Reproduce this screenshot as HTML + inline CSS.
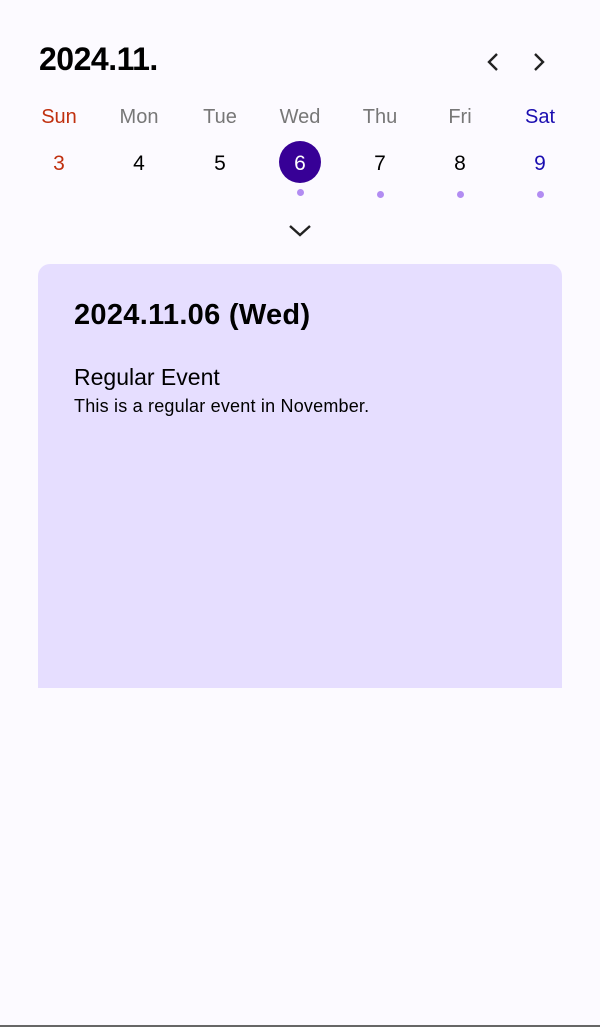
<!DOCTYPE html>
<html><head><style>
body{margin:0;width:600px;height:1027px;background:#fcfaff;font-family:"Liberation Sans","Noto Sans CJK KR",sans-serif;position:relative;overflow:hidden}
.a{position:absolute}
.t{left:39px;top:41px;font-size:32px;font-weight:bold;letter-spacing:-0.5px;color:#000}
.col{position:absolute;width:80px;text-align:center;margin-left:-40px}
.dn{top:106px;font-size:20px;color:#777}
.dt{top:152px;font-size:21px;color:#000}
.dot{position:absolute;width:7px;height:7px;border-radius:50%;background:#b28cf2}
.card{left:38px;top:264px;width:524px;height:424px;background:#e6deff;border-radius:12px 12px 0 0}
</style></head><body>
<div class="a t">2024.11.</div>
<svg class="a" style="left:484px;top:52px" width="18" height="20"><path d="M13 2 L5 10 L13 18" stroke="#222" stroke-width="2.4" fill="none"/></svg>
<svg class="a" style="left:530px;top:52px" width="18" height="20"><path d="M5 2 L13 10 L5 18" stroke="#222" stroke-width="2.4" fill="none"/></svg>
<div class="col dn" style="left:59px;color:#c0300f">Sun</div>
<div class="col dn" style="left:139px">Mon</div>
<div class="col dn" style="left:220px">Tue</div>
<div class="col dn" style="left:300px">Wed</div>
<div class="col dn" style="left:380px">Thu</div>
<div class="col dn" style="left:460px">Fri</div>
<div class="col dn" style="left:540px;color:#1a0db0">Sat</div>
<div class="a" style="left:279px;top:141px;width:42px;height:42px;border-radius:50%;background:#370096"></div>
<div class="col dt" style="left:59px;color:#c0300f">3</div>
<div class="col dt" style="left:139px">4</div>
<div class="col dt" style="left:220px">5</div>
<div class="col dt" style="left:300px;color:#fff">6</div>
<div class="col dt" style="left:380px">7</div>
<div class="col dt" style="left:460px">8</div>
<div class="col dt" style="left:540px;color:#1a0db0">9</div>
<div class="dot" style="left:297px;top:189px"></div>
<div class="dot" style="left:377px;top:191px"></div>
<div class="dot" style="left:457px;top:191px"></div>
<div class="dot" style="left:537px;top:191px"></div>
<svg class="a" style="left:288px;top:224px" width="24" height="14"><path d="M2 2 L12 11 L22 2" stroke="#222" stroke-width="2.4" fill="none"/></svg>
<div class="a card">
<div class="a" style="left:36px;top:35px;font-size:29px;font-weight:bold;letter-spacing:0.3px;color:#000">2024.11.06 (Wed)</div>
<div class="a" style="left:36px;top:100px;font-size:23px;color:#000">Regular Event</div>
<div class="a" style="left:36px;top:132px;font-size:18px;letter-spacing:0.2px;color:#000">This is a regular event in November.</div>
</div>
<div class="a" style="left:0;top:1025px;width:600px;height:2px;background:#666"></div>
</body></html>
